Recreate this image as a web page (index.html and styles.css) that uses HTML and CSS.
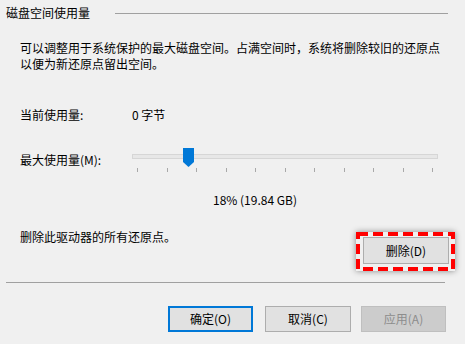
FILE: index.html
```html
<!DOCTYPE html>
<html lang="zh-CN">
<head>
<meta charset="utf-8">
<link rel="stylesheet" href="styles.css">
</head>
<body>
<div class="page">
  <div class="group-head">
    <span class="group-title">磁盘空间使用量</span>
    <span class="group-line"></span>
  </div>
  <p class="desc">可以调整用于系统保护的最大磁盘空间。占满空间时，系统将删除较旧的还原点<br>以便为新还原点留出空间。</p>
  <div class="row current">
    <span class="label">当前使用量:</span>
    <span class="value">0 字节</span>
  </div>
  <div class="row max">
    <span class="label label-max">最大使用量(M):</span>
    <div class="slider">
      <div class="track"></div>
      <svg class="thumb" width="11" height="19" viewBox="0 0 11 19"><polygon points="0,0 11,0 11,14 5.5,19 0,14" fill="#0078d7"/></svg>
      <div class="ticks">
        <span></span><span></span><span></span><span></span><span></span><span></span><span></span><span></span><span></span><span></span><span></span>
      </div>
    </div>
  </div>
  <div class="percent">18% (19.84 GB)</div>
  <div class="delete-row">
    <span class="delete-text">删除此驱动器的所有还原点。</span>
    <div class="highlight">
      <button class="btn btn-delete">删除(D)</button>
      <svg class="dash" width="99" height="39" viewBox="0 0 99 39"><rect x="2" y="2" width="95" height="35" fill="none" stroke="#ff0000" stroke-width="4" stroke-dasharray="10 5"/></svg>
    </div>
  </div>
  <div class="separator"></div>
  <div class="actions">
    <button class="btn btn-default">确定(O)</button>
    <button class="btn">取消(C)</button>
    <button class="btn btn-disabled">应用(A)</button>
  </div>
</div>
</body>
</html>
```
FILE: styles.css
```css
html, body {
  margin: 0;
  padding: 0;
  background: #f0f0f0;
}
body {
  width: 465px;
  height: 344px;
  overflow: hidden;
  font-family: "Noto Sans CJK SC", "Microsoft YaHei", sans-serif;
  font-size: 12px;
  color: #000;
}
.page {
  display: flex;
  flex-direction: column;
}
.group-head {
  display: flex;
  align-items: center;
  height: 26px;
  padding-left: 6px;
}
.group-title {
  line-height: 26px;
}
.group-line {
  margin-left: 25px;
  width: 333px;
  border-top: 1px solid #a0a0a0;
}
.desc {
  margin: 14px 0 0 20px;
  line-height: 16px;
}
.row {
  display: flex;
  padding-left: 20px;
}
.current {
  margin-top: 35px;
  line-height: 16px;
}
.label {
  width: 112px;
  flex: none;
}
.max {
  margin-top: 23px;
  align-items: flex-start;
}
.label-max {
  margin-top: 6px;
  line-height: 16px;
}
.slider {
  position: relative;
  width: 306px;
  height: 26px;
}
.track {
  margin-top: 8px;
  height: 3px;
  border: 1px solid #d6d6d6;
  background: #e7e7e7;
}
.thumb {
  position: absolute;
  left: 51px;
  top: 2px;
}
.ticks {
  display: flex;
  justify-content: space-between;
  margin: 9px 0 0 5px;
  width: 296px;
  height: 4px;
}
.ticks span {
  width: 1px;
  height: 4px;
  background: #a8a8a8;
}
.percent {
  margin: 20px 0 0 213px;
  line-height: 16px;
}
.delete-row {
  display: flex;
  justify-content: space-between;
  align-items: flex-start;
  margin-top: 21px;
  padding: 0 10px 0 20px;
}
.delete-text {
  line-height: 16px;
}
.highlight {
  position: relative;
  margin-top: 3px;
  width: 99px;
  height: 39px;
  box-sizing: border-box;
  padding: 5px 6px 7px 7px;
  box-shadow: 0 0 6px rgba(0, 0, 0, 0.45);
}
.dash {
  position: absolute;
  left: 0;
  top: 0;
}
.btn {
  font-family: inherit;
  font-size: 12px;
  color: #000;
  background: #e1e1e1;
  border: 1px solid #adadad;
  width: 86px;
  height: 26px;
  padding: 0;
  margin: 0;
  line-height: 16px;
  display: block;
}
.btn-delete {
  height: 27px;
}
.separator {
  margin: 11px 0 0 6px;
  width: 439px;
  border-top: 1px solid #a0a0a0;
}
.actions {
  display: flex;
  justify-content: flex-end;
  gap: 10px;
  margin-top: 23px;
  padding-right: 19px;
}
.btn-default {
  border: 2px solid #0078d7;
  width: 85px;
  margin-right: 2px;
}
.btn-disabled {
  width: 85px;
  background: #cccccc;
  border-color: #bfbfbf;
  color: #8d8d8d;
}
```
